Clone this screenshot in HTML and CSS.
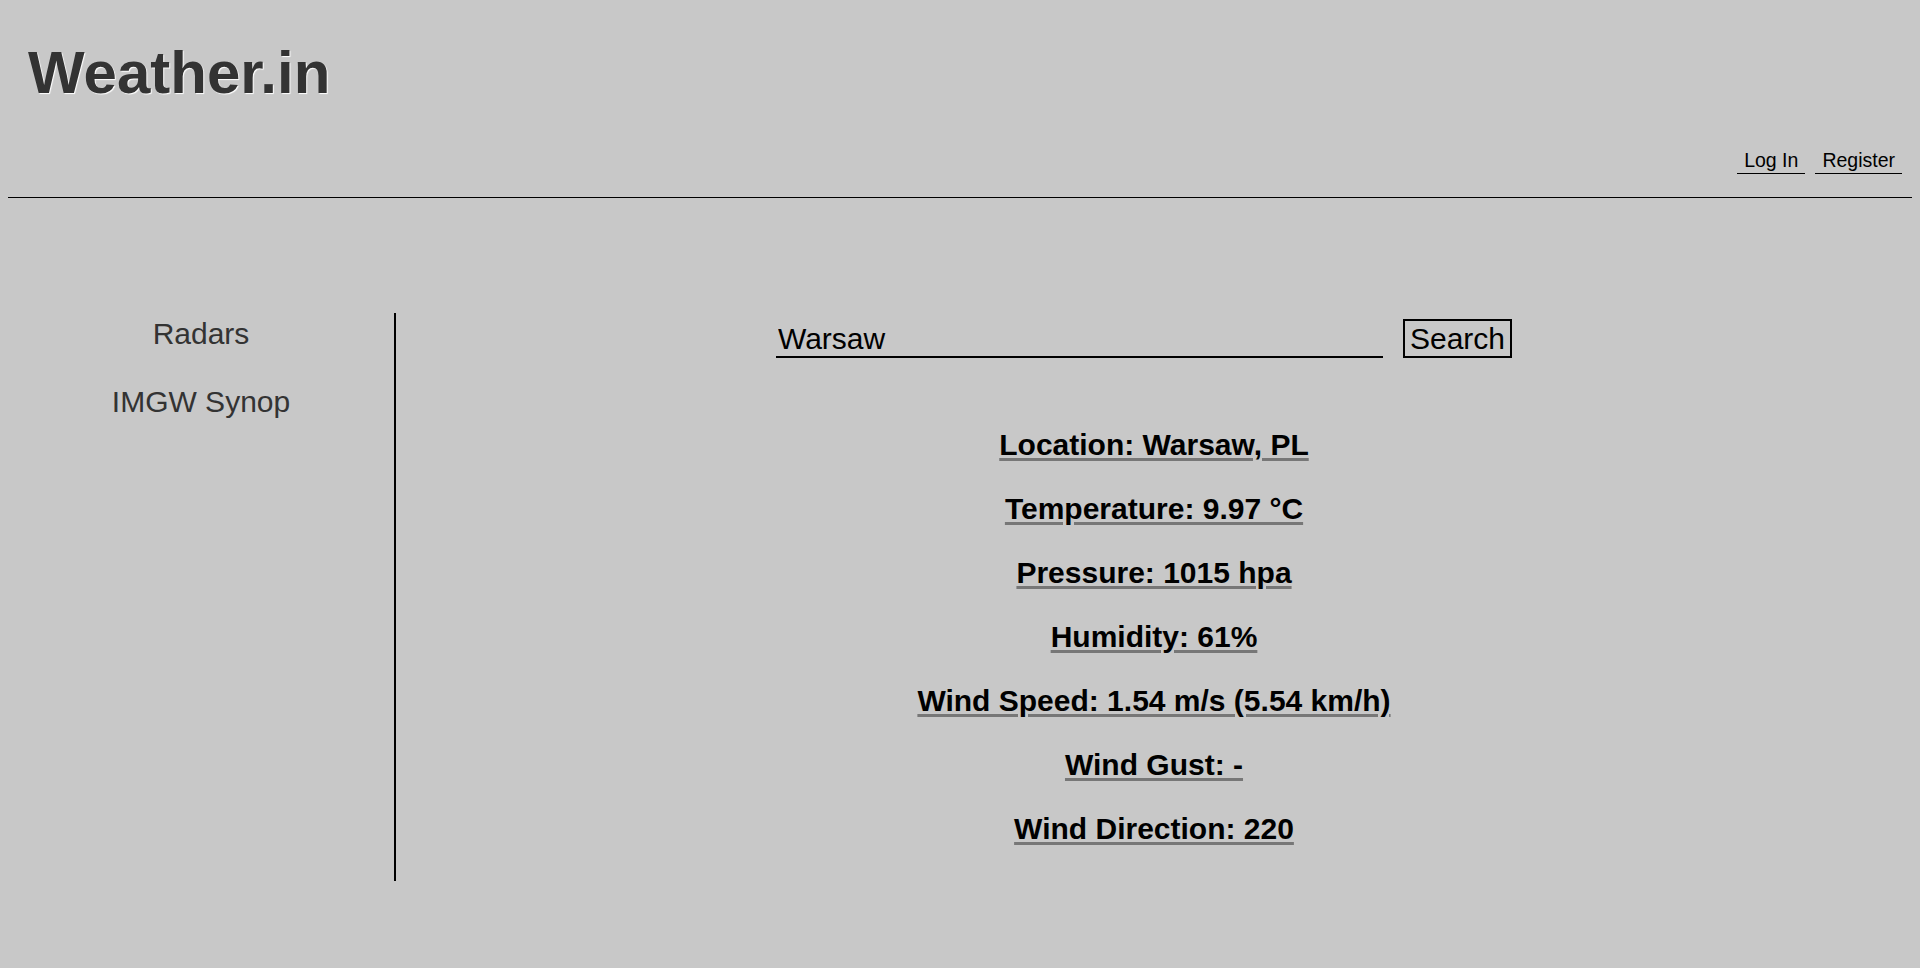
FILE: index.html
```html
<!DOCTYPE html>
<html lang="en">
<head>
<meta charset="utf-8">
<title>Weather.in</title>
<link rel="stylesheet" href="styles.css">
</head>
<body>
<header class="site-header">
  <h1 class="logo">Weather.in</h1>
  <nav class="account-nav">
    <a class="account-link" href="#">Log In</a>
    <a class="account-link" href="#">Register</a>
  </nav>
</header>
<main class="layout">
  <aside class="sidebar">
    <a class="side-link" href="#">Radars</a>
    <a class="side-link" href="#">IMGW Synop</a>
  </aside>
  <section class="content">
    <form class="search-form" onsubmit="return false;">
      <input class="search-input" type="text" value="Warsaw">
      <button class="search-button" type="submit">Search</button>
    </form>
    <div class="readings">
      <p class="reading">Location: Warsaw, PL</p>
      <p class="reading">Temperature: 9.97 °C</p>
      <p class="reading">Pressure: 1015 hpa</p>
      <p class="reading">Humidity: 61%</p>
      <p class="reading">Wind Speed: 1.54 m/s (5.54 km/h)</p>
      <p class="reading">Wind Gust: -</p>
      <p class="reading">Wind Direction: 220</p>
    </div>
  </section>
</main>
</body>
</html>
```
FILE: styles.css
```css
html, body {
  background: #c8c8c8;
}

body {
  margin: 8px;
  font-family: "Liberation Sans", Arial, sans-serif;
  color: #000;
}

.site-header {
  border-bottom: 1px solid #000;
  padding-bottom: 23px;
}

.logo {
  margin: 0;
  padding: 35px 0 0 20px;
  font-size: 60px;
  line-height: 1;
  font-weight: bold;
  color: #333;
  text-shadow: 1px 1px 1px #fff;
}

.account-nav {
  display: flex;
  justify-content: flex-end;
  gap: 10px;
  padding-right: 10px;
  margin-top: 46px;
}

.account-link {
  display: inline-block;
  font-size: 19.5px;
  line-height: 22px;
  padding: 0 7px 2px;
  color: #000;
  text-decoration: none;
  border-bottom: 1px solid #000;
}

.layout {
  display: flex;
  margin-top: 115px;
}

.sidebar {
  flex: 0 0 386px;
  border-right: 2px solid #000;
  display: flex;
  flex-direction: column;
  gap: 34px;
  padding-top: 3.5px;
}

.side-link {
  display: block;
  text-align: center;
  font-size: 30px;
  line-height: 34px;
  color: #333;
  text-decoration: none;
}

.content {
  flex: 1;
  padding-bottom: 35px;
}

.search-form {
  display: flex;
  justify-content: center;
  align-items: flex-end;
  gap: 20px;
  margin: 6px 0 0;
  padding-right: 20px;
}

.search-input {
  box-sizing: border-box;
  width: 607px;
  margin: 0;
  padding: 0 2px;
  border: none;
  border-bottom: 2px solid #000;
  background: transparent;
  font-family: inherit;
  font-size: 30px;
  line-height: 34px;
  height: 36px;
  color: #000;
  outline: none;
}

.search-button {
  margin: 0;
  padding: 0 5px;
  border: 2px solid #000;
  border-radius: 0;
  background: transparent;
  font-family: inherit;
  font-size: 30px;
  line-height: 35px;
  color: #000;
}

.readings {
  display: flex;
  flex-direction: column;
  gap: 30px;
  margin-top: 70px;
}

.reading {
  margin: 0;
  text-align: center;
  font-size: 30px;
  line-height: 34px;
  font-weight: bold;
  color: #000;
  text-decoration: underline;
  text-decoration-color: #777;
  text-decoration-thickness: 3px;
  text-underline-offset: 3px;
}
```
